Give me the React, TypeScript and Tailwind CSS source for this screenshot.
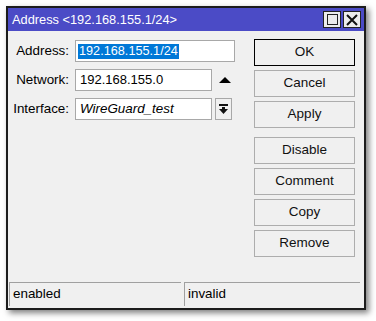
const font = { fontFamily: '"Liberation Sans", Arial, sans-serif' };

function TitleButton({ kind }: { kind: "max" | "close" }) {
  return (
    <div className="flex h-[17px] w-[18px] items-center justify-center border border-[#222] bg-[#ececec]">
      {kind === "max" ? (
        <div className="h-[11px] w-[11px] border-[1.5px] border-[#222]" />
      ) : (
        <svg width="12" height="12" viewBox="0 0 12 12">
          <path d="M1 1 L11 11 M11 1 L1 11" stroke="#111" strokeWidth="2" />
        </svg>
      )}
    </div>
  );
}

function Field({ label, children }: { label: string; children: React.ReactNode }) {
  return (
    <div className="flex h-[22px] items-center">
      <div className="w-[62px] pr-[1px] text-right text-[13.4px] text-black">{label}</div>
      <div className="ml-[5px] flex h-full items-center">{children}</div>
    </div>
  );
}

const buttons = ["OK", "Cancel", "Apply", "Disable", "Comment", "Copy", "Remove"];

export default function App() {
  return (
    <div className="min-h-screen bg-white pl-[6px] pt-[6px]" style={font}>
      <div className="flex h-[304px] w-[360px] flex-col border-2 border-[#1c1c1c] bg-[#f0f0f0] text-[13px] shadow-[3px_3px_6px_rgba(0,0,0,0.5)]">
        <div className="flex h-[23px] items-center justify-between bg-[#4b4bc6] pl-[4px] pr-[3px]">
          <span className="text-[12.8px] text-white">Address &lt;192.168.155.1/24&gt;</span>
          <div className="flex gap-[2px]">
            <TitleButton kind="max" />
            <TitleButton kind="close" />
          </div>
        </div>

        <div className="flex flex-1">
          <div className="flex w-[246px] flex-col gap-[7px] pt-[9px]">
            <Field label="Address:">
              <div className="flex h-full w-[160px] items-center border border-[#a8a8a8] bg-white pl-[2px]">
                <span className="bg-[#0078d7] px-[1px] text-[12.7px] leading-[15px] text-white">192.168.155.1/24</span>
              </div>
            </Field>
            <Field label="Network:">
              <div className="flex h-full w-[137px] items-center border border-[#a8a8a8] bg-white pl-[4px] text-black">
                192.168.155.0
              </div>
              <svg className="ml-[7px]" width="12" height="6" viewBox="0 0 12 6">
                <path d="M0 6 L6 0 L12 6 Z" fill="#000" />
              </svg>
            </Field>
            <Field label="Interface:">
              <div className="flex h-full w-[137px] items-center border border-[#a8a8a8] bg-white pl-[4px] text-[13.4px] italic text-black">
                WireGuard_test
              </div>
              <div className="ml-[3px] flex h-full w-[17px] items-center justify-center border border-[#a8a8a8] bg-[#f0f0f0]">
                <svg width="9" height="10" viewBox="0 0 9 10">
                  <rect x="0" y="0" width="9" height="2" fill="#111" />
                  <rect x="3" y="3" width="3" height="2" fill="#111" />
                  <path d="M0 5 L9 5 L4.5 10 Z" fill="#111" />
                </svg>
              </div>
            </Field>
          </div>

          <div className="flex w-[101px] flex-col gap-[4px] pt-[8px]">
            {buttons.map((b, i) => (
              <div
                key={b}
                className={`flex h-[27px] items-center justify-center border text-[13.5px] text-[#111] ${
                  i === 0 ? "border-black" : "border-[#adadad]"
                } ${i === 3 ? "mt-[5px]" : ""}`}
              >
                {b}
              </div>
            ))}
          </div>
        </div>

        <div className="flex h-[26px] gap-[3px] pb-[2px] pl-[1px]">
          <div className="flex w-[172px] items-center border-l border-t border-[#a0a0a0] pl-[3px] text-[13.4px] text-black">
            enabled
          </div>
          <div className="flex w-[176px] items-center border-l border-t border-[#a0a0a0] pl-[3px] text-[13.4px] text-black">
            invalid
          </div>
        </div>
      </div>
    </div>
  );
}
